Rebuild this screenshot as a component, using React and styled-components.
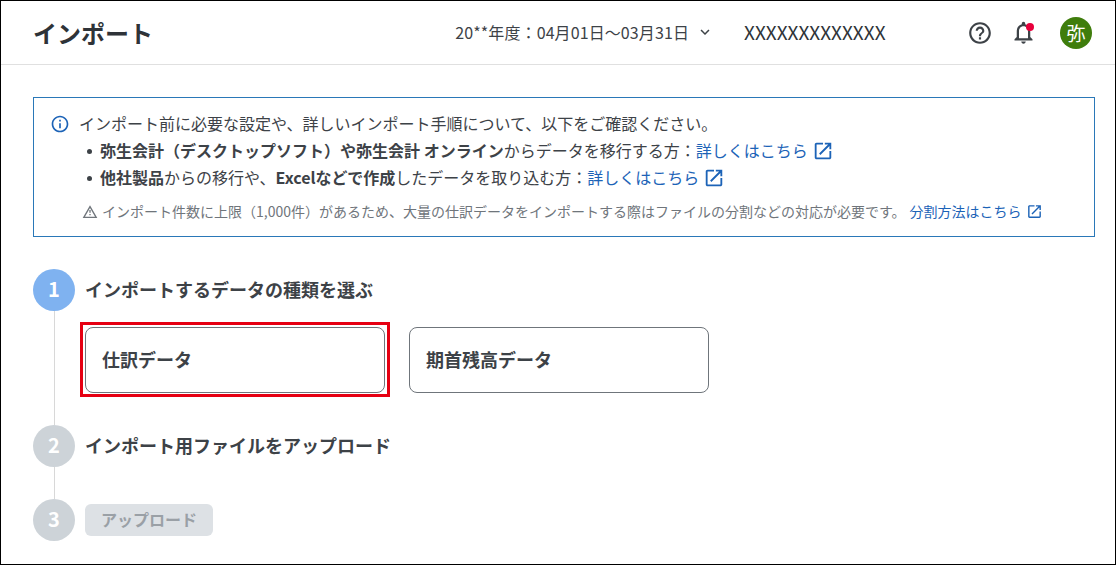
import styled, { createGlobalStyle } from "styled-components";

const GlobalStyle = createGlobalStyle`
    html, body {
        margin: 0;
        padding: 0;
        background: #fff;
    }
    body {
        font-family: "Noto Sans CJK JP", "Noto Sans", sans-serif;
        color: #3d4247;
    }
    * {
        box-sizing: border-box;
    }
`;

const Icon = ({ d, size = 24, color = "currentColor" }) => (
    <svg width={size} height={size} viewBox="0 0 24 24" fill={color} style={{ flex: "none" }}>
        <path d={d} />
    </svg>
);

const PATHS = {
    help: "M11 18h2v-2h-2v2zm1-16C6.48 2 2 6.48 2 12s4.48 10 10 10 10-4.48 10-10S17.52 2 12 2zm0 18c-4.41 0-8-3.59-8-8s3.59-8 8-8 8 3.59 8 8-3.59 8-8 8zm0-14c-2.21 0-4 1.79-4 4h2c0-1.1.9-2 2-2s2 .9 2 2c0 2-3 1.75-3 5h2c0-2.25 3-2.5 3-5 0-2.21-1.79-4-4-4z",
    bell: "M12 22c1.1 0 2-.9 2-2h-4c0 1.1.9 2 2 2zm6-6v-5c0-3.07-1.63-5.64-4.5-6.32V4c0-.83-.67-1.5-1.5-1.5s-1.5.67-1.5 1.5v.68C7.64 5.36 6 7.92 6 11v5l-2 2v1h16v-1l-2-2zm-2 1H8v-6c0-2.48 1.51-4.5 4-4.5s4 2.02 4 4.5v6z",
    info: "M11 7h2v2h-2zm0 4h2v6h-2zm1-9C6.48 2 2 6.48 2 12s4.48 10 10 10 10-4.48 10-10S17.52 2 12 2zm0 18c-4.41 0-8-3.59-8-8s3.59-8 8-8 8 3.59 8 8-3.59 8-8 8z",
    external: "M19 19H5V5h7V3H5c-1.11 0-2 .9-2 2v14c0 1.1.89 2 2 2h14c1.1 0 2-.9 2-2v-7h-2v7zM14 3v2h3.59l-9.83 9.83 1.41 1.41L19 6.41V10h2V3h-7z",
    warning: "M12 5.99L19.53 19H4.47L12 5.99M12 2L1 21h22L12 2zm1 13h-2v2h2v-2zm0-6h-2v4h2V9z",
    chevron: "M7.41 8.59 12 13.17l4.59-4.58L18 10l-6 6-6-6z",
};

const App = () => {
    return (
        <>
            <GlobalStyle />
            <Frame>
                <Header>
                    <Title>インポート</Title>
                    <FiscalYear>
                        20**年度：04月01日〜03月31日
                        <Icon d={PATHS.chevron} size={18} />
                    </FiscalYear>
                    <Company>XXXXXXXXXXXXX</Company>
                    <HeaderIcons>
                        <Icon d={PATHS.help} size={26} />
                        <BellWrap>
                            <Icon d={PATHS.bell} size={27} />
                            <BellDot />
                        </BellWrap>
                        <Avatar>弥</Avatar>
                    </HeaderIcons>
                </Header>
                <Main>
                    <InfoBox>
                        <InfoLead>
                            <InfoIcon><Icon d={PATHS.info} size={20} /></InfoIcon>
                            インポート前に必要な設定や、詳しいインポート手順について、以下をご確認ください。
                        </InfoLead>
                        <BulletList>
                            <li>
                                <b>弥生会計（デスクトップソフト）や弥生会計 オンライン</b>からデータを移行する方：
                                <DocLink>詳しくはこちら<Icon d={PATHS.external} size={22} /></DocLink>
                            </li>
                            <li>
                                <b>他社製品</b>からの移行や、<b>Excelなどで作成</b>したデータを取り込む方：
                                <DocLink>詳しくはこちら<Icon d={PATHS.external} size={22} /></DocLink>
                            </li>
                        </BulletList>
                        <Notice>
                            <Icon d={PATHS.warning} size={16} />
                            <NoticeText>インポート件数に上限（1,000件）があるため、大量の仕訳データをインポートする際はファイルの分割などの対応が必要です。</NoticeText>
                            <SmallLink>分割方法はこちら<Icon d={PATHS.external} size={17} /></SmallLink>
                        </Notice>
                    </InfoBox>

                    <Step>
                        <Rail>
                            <StepNumber $active>1</StepNumber>
                            <RailLine />
                        </Rail>
                        <StepBody $height={156}>
                            <StepTitle>インポートするデータの種類を選ぶ</StepTitle>
                            <CardRow>
                                <TypeCard $highlighted>仕訳データ</TypeCard>
                                <TypeCard>期首残高データ</TypeCard>
                            </CardRow>
                        </StepBody>
                    </Step>
                    <Step>
                        <Rail>
                            <StepNumber>2</StepNumber>
                            <RailLine />
                        </Rail>
                        <StepBody $height={74}>
                            <StepTitle>インポート用ファイルをアップロード</StepTitle>
                        </StepBody>
                    </Step>
                    <Step>
                        <Rail>
                            <StepNumber>3</StepNumber>
                        </Rail>
                        <StepBody>
                            <UploadButton disabled>アップロード</UploadButton>
                        </StepBody>
                    </Step>
                </Main>
            </Frame>
        </>
    );
};

const Frame = styled.div`
    width: 1116px;
    height: 565px;
    border: 1px solid #000;
    overflow: hidden;
    background: #fff;
`;

const Header = styled.header`
    display: flex;
    align-items: center;
    height: 64px;
    padding: 0 23px 0 32px;
    border-bottom: 1px solid #e0e0e0;
`;

const Title = styled.h1`
    margin: 0;
    font-size: 24px;
    font-weight: 700;
    color: #2e3338;
    line-height: 1;
    flex: 1;
`;

const FiscalYear = styled.div`
    display: flex;
    align-items: center;
    gap: 7px;
    font-size: 16px;
    letter-spacing: 0.1px;
    color: #3d4247;
    padding-bottom: 2px;
`;

const Company = styled.div`
    margin-left: 30px;
    width: 142px;
    font-size: 19px;
    line-height: 1;
    color: #2e3338;
    white-space: nowrap;
    padding-bottom: 3px;
`;

const HeaderIcons = styled.div`
    display: flex;
    align-items: center;
    gap: 17px;
    margin-left: 81px;
    color: #3d4247;
`;

const BellWrap = styled.div`
    position: relative;
    display: flex;
`;

const BellDot = styled.span`
    position: absolute;
    top: 4px;
    right: 3px;
    width: 8px;
    height: 8px;
    border-radius: 50%;
    background: #e8003c;
`;

const Avatar = styled.div`
    width: 32px;
    height: 32px;
    margin-left: 6px;
    border-radius: 50%;
    background: #3f7d0c;
    color: #fff;
    font-size: 19px;
    display: flex;
    align-items: center;
    justify-content: center;
`;

const Main = styled.main`
    padding: 32px 20px 0 32px;
`;

const InfoBox = styled.section`
    width: 1062px;
    height: 140px;
    border: 1px solid #2a78b8;
    padding: 12px 16px 0;
    margin-bottom: 32px;
    font-size: 16px;
    line-height: 27px;
`;

const InfoLead = styled.div`
    display: flex;
    align-items: center;
    color: #3d4247;
`;

const InfoIcon = styled.span`
    display: flex;
    margin-right: 9px;
    color: #1c63b7;
`;

const BulletList = styled.ul`
    margin: 0;
    padding: 0 0 0 50px;
    list-style: none;

    li {
        position: relative;
        display: flex;
        align-items: center;
    }
    li::before {
        content: "";
        position: absolute;
        left: -13px;
        top: 12px;
        width: 5px;
        height: 5px;
        border-radius: 50%;
        background: #3d4247;
    }
    b {
        font-weight: 700;
    }
`;

const DocLink = styled.a`
    display: inline-flex;
    align-items: center;
    gap: 4px;
    color: #1c63b7;
`;

const Notice = styled.div`
    display: flex;
    align-items: center;
    margin: 7px 0 0 32px;
    font-size: 14px;
    color: #6f757b;
`;

const NoticeText = styled.span`
    margin-left: 4px;
`;

const SmallLink = styled.a`
    display: inline-flex;
    align-items: center;
    gap: 4px;
    margin-left: 4px;
    color: #1c63b7;
`;

const Step = styled.div`
    display: flex;
    gap: 10px;
`;

const Rail = styled.div`
    display: flex;
    flex-direction: column;
    align-items: center;
    width: 42px;
`;

const StepNumber = styled.div`
    width: 42px;
    height: 42px;
    flex: none;
    border-radius: 50%;
    background: ${(p) => (p.$active ? "#7fb2f0" : "#cdd3d8")};
    color: #fff;
    font-size: 20px;
    font-weight: 700;
    padding-bottom: 4px;
    display: flex;
    align-items: center;
    justify-content: center;
`;

const RailLine = styled.div`
    width: 1px;
    flex: 1;
    background: #d8d8d8;
`;

const StepBody = styled.div`
    flex: 1;
    min-height: ${(p) => (p.$height ? `${p.$height}px` : "42px")};
    display: flex;
    flex-direction: column;
    align-items: flex-start;
`;

const StepTitle = styled.h2`
    margin: 0;
    height: 42px;
    padding-bottom: 3px;
    display: flex;
    align-items: center;
    font-size: 18px;
    font-weight: 700;
    color: #3d4247;
`;

const CardRow = styled.div`
    display: flex;
    gap: 24px;
    margin-top: 16px;
`;

const TypeCard = styled.div`
    position: relative;
    width: 300px;
    height: 66px;
    padding: 0 0 3px 16px;
    display: flex;
    align-items: center;
    border: 1px solid #6f757b;
    border-radius: 8px;
    background: #fff;
    font-size: 18px;
    font-weight: 700;
    color: #3d4247;

    ${(p) => p.$highlighted && `
        &::after {
            content: "";
            position: absolute;
            inset: -6px -6px -5px -6px;
            border: 3px solid #e60012;
        }
    `}
`;

const UploadButton = styled.button`
    width: 128px;
    height: 32px;
    margin-top: 5px;
    padding: 0 0 3px;
    border: 0;
    border-radius: 6px;
    background: #dde1e5;
    color: #9aa0a6;
    font-family: inherit;
    font-size: 16px;
    font-weight: 700;
`;

export default App;
